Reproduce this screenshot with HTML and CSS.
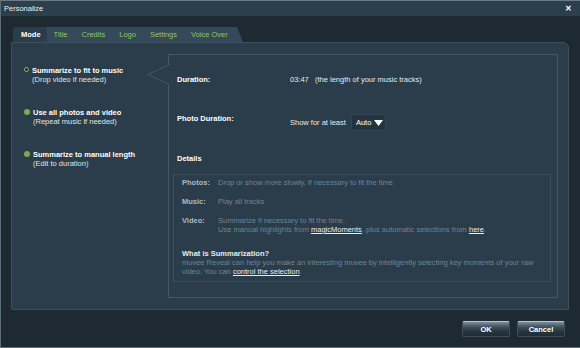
FILE: index.html
```html
<!DOCTYPE html>
<html lang="en">
<head>
    <meta charset="UTF-8">
    <title>Personalize</title>
    <link rel="stylesheet" href="styles.css">
</head>
<body>
    <div class="window">
        <div class="titlebar">
            <span class="title">Personalize</span>
            <span class="close">&#x2715;</span>
        </div>
        <div class="content">
            <div class="tabs">
                <span class="tab active">Mode</span>
                <span class="tab">Title</span>
                <span class="tab">Credits</span>
                <span class="tab">Logo</span>
                <span class="tab">Settings</span>
                <span class="tab">Voice Over</span>
            </div>
            <div class="panel">
                <div class="modes">
                    <div class="mode selected">
                        <span class="dot"></span>
                        <div>
                            <strong>Summarize to fit to music</strong>
                            <span>(Drop video if needed)</span>
                        </div>
                    </div>
                    <div class="mode">
                        <span class="dot"></span>
                        <div>
                            <strong>Use all photos and video</strong>
                            <span>(Repeat music if needed)</span>
                        </div>
                    </div>
                    <div class="mode">
                        <span class="dot"></span>
                        <div>
                            <strong>Summarize to manual length</strong>
                            <span>(Edit to duration)</span>
                        </div>
                    </div>
                </div>
                <div class="options">
                    <svg class="notch" width="23" height="22" viewBox="0 0 23 22">
                        <polygon points="23,0.5 1,10.5 23,20.5" fill="#2b3d4a"/>
                        <polyline points="22.5,0.5 1,10.5 22.5,20.5" fill="none" stroke="#435665" stroke-width="1"/>
                    </svg>
                    <div class="row">
                        <span class="label">Duration:</span>
                        <span class="value">03:47&nbsp;&nbsp; (the length of your music tracks)</span>
                    </div>
                    <div class="row photo-row">
                        <span class="label">Photo Duration:</span>
                        <span class="value">Show for at least
                            <span class="select">Auto
                                <svg width="9" height="6" viewBox="0 0 9 6"><polygon points="0,0 9,0 4.5,6" fill="#fff"/></svg>
                            </span>
                        </span>
                    </div>
                    <div class="details-title">Details</div>
                    <div class="details">
                        <div class="drow">
                            <span class="dlabel">Photos:</span>
                            <span>Drop or show more slowly, if necessary to fit the time</span>
                        </div>
                        <div class="drow">
                            <span class="dlabel">Music:</span>
                            <span>Play all tracks</span>
                        </div>
                        <div class="drow">
                            <span class="dlabel">Video:</span>
                            <span>Summarize if necessary to fit the time.<br>Use manual highlights from <a>magicMoments</a>, plus automatic selections from <a>here</a>.</span>
                        </div>
                        <div class="what">
                            <strong>What is Summarization?</strong>
                            <p>muvee Reveal can help you make an interesting muvee by intelligently selecting key moments of your raw<br>video. You can <a>control the selection</a>.</p>
                        </div>
                    </div>
                </div>
            </div>
            <div class="footer">
                <button>OK</button>
                <button>Cancel</button>
            </div>
        </div>
    </div>
</body>
</html>
```

FILE: styles.css
```css
html, body {
    margin: 0;
    padding: 0;
}
body {
    font-family: 'Liberation Sans', Arial, sans-serif;
    font-size: 7.5px;
    background-color: #1e2a31;
    color: #ffffff;
}
.window {
    width: 580px;
    height: 348px;
    box-sizing: border-box;
    border-left: 1px solid #5d6d77;
    border-bottom: 1px solid #5d6d77;
    border-top: 1px solid #6a7b85;
    background-color: #1e2a31;
}
.titlebar {
    height: 15px;
    background-color: #2b3f4c;
    display: flex;
    align-items: center;
    justify-content: space-between;
    padding: 0 8px 0 3px;
}
.title {
    font-size: 7.5px;
    color: #eef2f4;
}
.close {
    font-size: 8px;
    font-weight: bold;
    color: #ffffff;
}
.content {
    padding: 11px 11px 0 10px;
}
.tabs {
    display: flex;
    align-items: center;
    width: 230px;
    height: 15px;
    margin-left: 2px;
    background-color: #34495a;
    border-radius: 4px 0 0 0;
    clip-path: polygon(0 0, 224px 0, 230px 100%, 0 100%);
    white-space: nowrap;
}
.tab {
    color: #93c75a;
    line-height: 15px;
    padding: 0 7px;
}
.tab.active {
    color: #ffffff;
    font-weight: bold;
    background-color: #2b3d4a;
    padding: 0 6px 0 8px;
    margin-right: 0;
    border-radius: 3px 3px 0 0;
}
.panel {
    height: 268px;
    box-sizing: border-box;
    background-color: #2b3d4a;
    border: 1px solid #3d505d;
    border-radius: 0 6px 0 2px;
    display: flex;
    padding: 11px 10px 11px 0;
}
.modes {
    width: 156px;
    padding-top: 12px;
    display: flex;
    flex-direction: column;
    gap: 24px;
}
.mode {
    display: flex;
    align-items: flex-start;
    padding-left: 12px;
    gap: 3px;
    line-height: 9px;
}
.mode strong,
.mode span {
    display: block;
}
.mode div span {
    color: #dfe6ea;
}
.dot {
    width: 6px;
    height: 6px;
    margin-top: 1px;
    border-radius: 50%;
    background-color: #77ab4d;
    flex-shrink: 0;
}
.mode.selected .dot {
    width: 3px;
    height: 3px;
    background-color: #1c2a30;
    border: 1.5px solid #8cc45a;
}
.options {
    flex: 1;
    position: relative;
    border: 1px solid #435665;
    padding: 20px 6px 15px 4px;
    display: flex;
    flex-direction: column;
}
.notch {
    position: absolute;
    left: -22px;
    top: 9px;
}
.row {
    display: flex;
    line-height: 9px;
    padding-left: 4px;
}
.label {
    width: 113px;
    font-weight: bold;
}
.value {
    color: #e4eaee;
    display: flex;
    align-items: center;
    gap: 5px;
}
.photo-row {
    margin-top: 30px;
}
.select {
    display: inline-flex;
    align-items: center;
    gap: 3px;
    padding: 3px 2px 3px 4px;
    background-color: #233440;
    border: 1px solid #324553;
    color: #ffffff;
}
.details-title {
    font-weight: bold;
    margin-top: 23px;
    padding-left: 4px;
    line-height: 9px;
}
.details {
    margin-top: 11px;
    flex: 1;
    border: 1px solid #3b4e5b;
    padding: 3px 8px 0 8px;
    color: #6f8491;
    line-height: 9px;
}
.drow {
    display: flex;
    margin-bottom: 10px;
}
.dlabel {
    width: 36px;
    flex-shrink: 0;
    font-weight: bold;
    color: #a9bac5;
}
.details a {
    color: #e6ecef;
    text-decoration: underline;
}
.what {
    margin-top: 15px;
}
.what strong {
    color: #e4ebef;
}
.what p {
    margin: 0;
}
.footer {
    display: flex;
    justify-content: flex-end;
    gap: 7px;
    padding: 11px 4px 0 0;
}
button {
    width: 48px;
    height: 16px;
    padding: 0;
    font-family: 'Liberation Sans', Arial, sans-serif;
    font-size: 7.5px;
    font-weight: bold;
    color: #ffffff;
    border: 1px solid #3d4e59;
    border-top: 1px solid #b7c3ca;
    border-radius: 2px;
    background: linear-gradient(#7d8f9a 0%, #3e515d 35%, #24343d 70%, #1f2d35 100%);
}
```
